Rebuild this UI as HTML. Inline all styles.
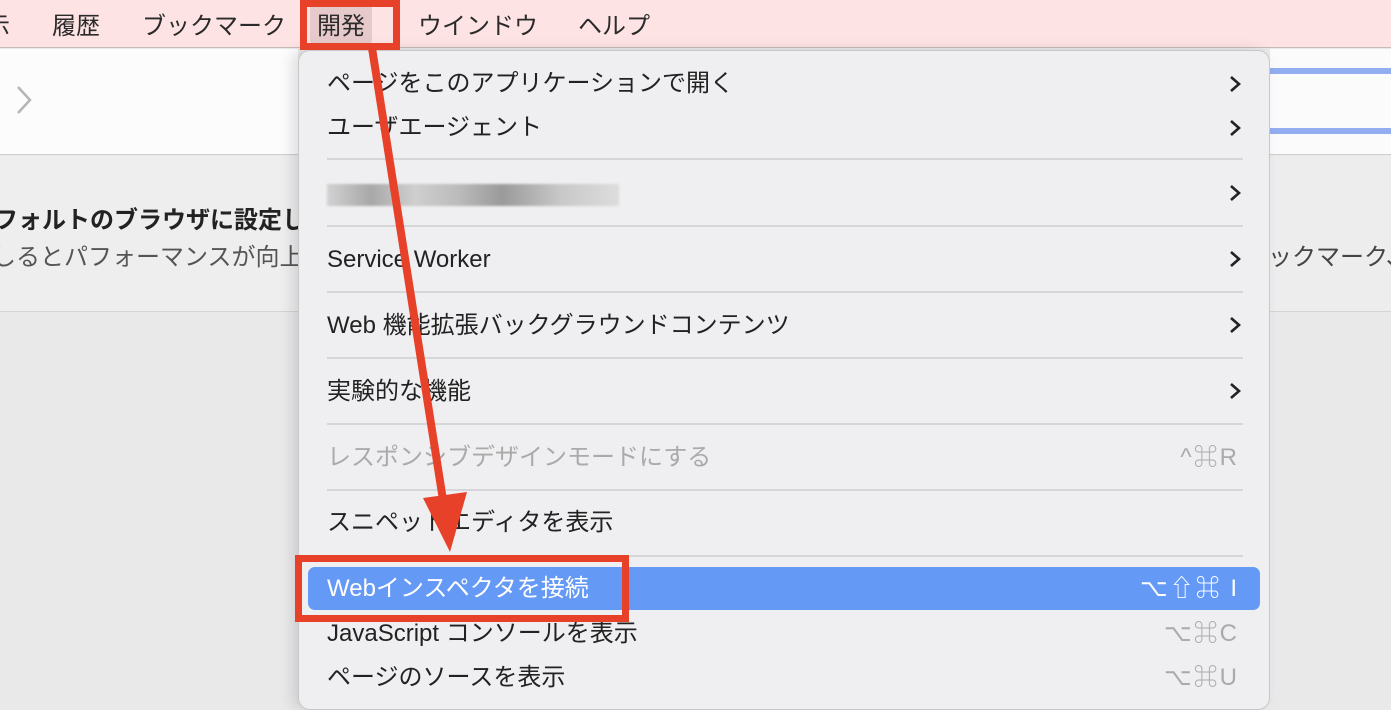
<!DOCTYPE html>
<html><head><meta charset="utf-8"><style>
*{margin:0;padding:0;box-sizing:border-box}
body{width:1391px;height:700px;overflow:hidden;position:relative;background:#eae9ea;font-family:"Liberation Sans","Noto Sans CJK JP",sans-serif;color:#222}
.abs{position:absolute;white-space:nowrap}
.bar{left:0;top:0;width:1391px;height:48px;background:#fde3e4;border-bottom:1px solid #c9b9ba}
.bar span{position:absolute;top:6px;font-size:24px;color:#2a2a2a}
.menu{left:298px;top:50px;width:972px;height:660px;background:#efeef0;border-radius:12px;border:1px solid #c8c8c8;box-shadow:-6px 0 14px rgba(0,0,0,.12)}
.it{position:absolute;left:28px;font-size:24px;color:#222;line-height:30px}
.sep{position:absolute;left:28px;width:916px;height:2px;background:#d6d5d7}
.chev{position:absolute;left:928px;width:16px;height:20px}
.sc{position:absolute;right:30px;font-size:24px;color:#aaa;line-height:30px;letter-spacing:2px}
</style></head><body>
<div class="abs" style="left:0;top:49px;width:298px;height:106px;background:#fdfcfd;border-bottom:1px solid #cfcfcf"></div>
<svg class="abs" style="left:12px;top:84px" width="24" height="34"><path d="M6 3 L18 16 L6 29" fill="none" stroke="#b5b5b5" stroke-width="2.5"/></svg>
<div class="abs" style="left:0;top:156px;width:298px;height:156px;background:#efeeef;border-bottom:1px solid #d5d5d5"></div>
<div class="abs" style="left:-6px;top:200px;font-size:24px;font-weight:bold;color:#222">フォルトのブラウザに設定し</div>
<div class="abs" style="left:-8px;top:237px;font-size:24px;color:#555">しるとパフォーマンスが向上</div>
<div class="abs" style="left:1270px;top:49px;width:121px;height:106px;background:#fbfbfc;border-bottom:1px solid #cfcfcf"></div>
<div class="abs" style="left:1270px;top:68px;width:121px;height:6px;background:#93aef0"></div>
<div class="abs" style="left:1270px;top:128px;width:121px;height:6px;background:#93aef0"></div>
<div class="abs" style="left:1270px;top:156px;width:121px;height:156px;background:#eeedee;border-bottom:1px solid #d5d5d5"></div>
<div class="abs" style="left:1268px;top:237px;font-size:24px;color:#444">ックマーク、</div>
<div class="abs bar">
<span style="left:-14px">示</span><span style="left:52px">履歴</span><span style="left:142px">ブックマーク</span>
<span style="left:310px;top:3px;padding:3px 7px;background:#e6c9cb;border-radius:4px">開発</span>
<span style="left:418px">ウインドウ</span><span style="left:578px">ヘルプ</span>
</div>
<div class="abs menu">
<div class="it" style="top:18px">ページをこのアプリケーションで開く</div>
<svg class="chev" style="top:23px"><path d="M4 3 L12 10 L4 17" fill="none" stroke="#222" stroke-width="2.6"/></svg>
<div class="it" style="top:62px">ユーザエージェント</div>
<svg class="chev" style="top:67px"><path d="M4 3 L12 10 L4 17" fill="none" stroke="#222" stroke-width="2.6"/></svg>
<div class="sep" style="top:107px"></div>
<div style="position:absolute;left:28px;top:133px;width:292px;height:22px;background:linear-gradient(90deg,#d2d2d2,#a8a8a8 15%,#cfcfcf 30%,#bbb 45%,#9a9a9a 60%,#c8c8c8 80%,#ddd);filter:blur(1px)"></div>
<svg class="chev" style="top:132px"><path d="M4 3 L12 10 L4 17" fill="none" stroke="#222" stroke-width="2.6"/></svg>
<div class="sep" style="top:174px"></div>
<div class="it" style="top:194px">Service Worker</div>
<svg class="chev" style="top:198px"><path d="M4 3 L12 10 L4 17" fill="none" stroke="#222" stroke-width="2.6"/></svg>
<div class="sep" style="top:240px"></div>
<div class="it" style="top:260px">Web 機能拡張バックグラウンドコンテンツ</div>
<svg class="chev" style="top:264px"><path d="M4 3 L12 10 L4 17" fill="none" stroke="#222" stroke-width="2.6"/></svg>
<div class="sep" style="top:306px"></div>
<div class="it" style="top:326px">実験的な機能</div>
<svg class="chev" style="top:330px"><path d="M4 3 L12 10 L4 17" fill="none" stroke="#222" stroke-width="2.6"/></svg>
<div class="sep" style="top:372px"></div>
<div class="it" style="top:392px;color:#aaa">レスポンシブデザインモードにする</div>
<div class="sc" style="top:392px">^⌘R</div>
<div class="sep" style="top:438px"></div>
<div class="it" style="top:457px">スニペットエディタを表示</div>
<div class="sep" style="top:504px"></div>
<div style="position:absolute;left:9px;top:516px;width:952px;height:43px;background:#6499f5;border-radius:7px"></div>
<div class="it" style="top:523px;color:#fff">Webインスペクタを接続</div>
<div class="sc" style="top:523px;color:#fff">⌥⇧⌘ I</div>
<div class="it" style="top:568px">JavaScript コンソールを表示</div>
<div class="sc" style="top:568px">⌥⌘C</div>
<div class="it" style="top:612px">ページのソースを表示</div>
<div class="sc" style="top:612px">⌥⌘U</div>
</div>
<div class="abs" style="left:300px;top:0;width:100px;height:50px;border:7px solid #e8412a"></div>
<div class="abs" style="left:295px;top:555px;width:334px;height:67px;border:7px solid #e8412a"></div>
<svg class="abs" style="left:0;top:0" width="1391" height="700">
<line x1="372" y1="48" x2="443" y2="500" stroke="#e8412a" stroke-width="8"/>
<polygon points="423,498 467,492 450,552" fill="#e8412a"/>
</svg>
</body></html>
